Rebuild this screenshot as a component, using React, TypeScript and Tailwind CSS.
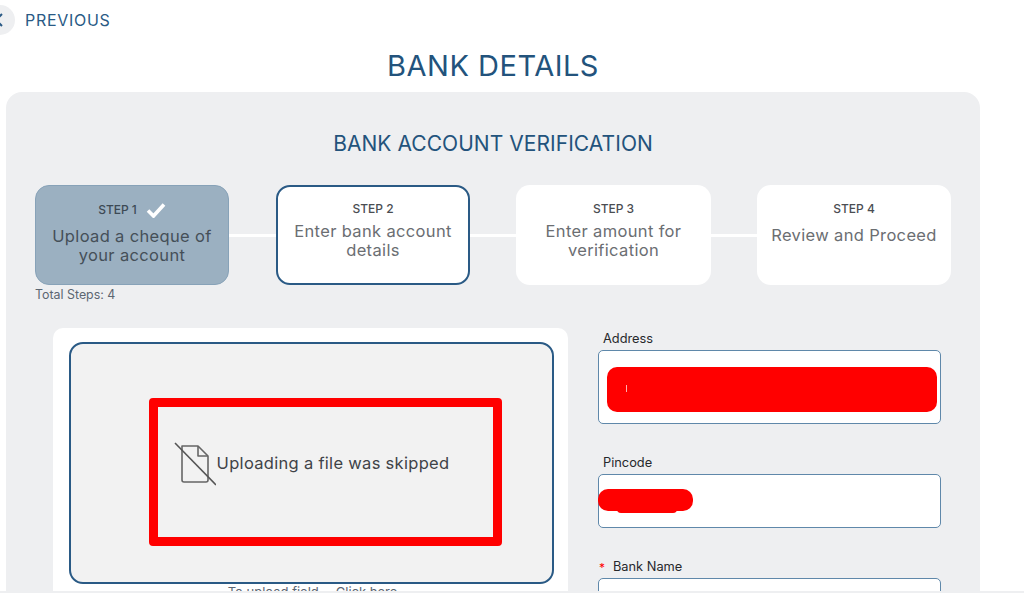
const steps = [
  { label: 'STEP 2', text: 'Enter bank account details', outlined: true },
  { label: 'STEP 3', text: 'Enter amount for verification', outlined: false },
];

function Field({ label, required, height, children }: { label: string; required?: boolean; height: string; children?: React.ReactNode }) {
  return (
    <div className="flex flex-col">
      <div className="flex items-center h-[24px] pt-[1px] text-[12.8px] text-[#26282c] pl-[5px]">
        {required && <span className="text-[#ff0000] text-[12px] w-[6px] -ml-[4px] mr-[8px] pt-[3px] leading-none">*</span>}
        {label}
      </div>
      <div className={`relative ${height} bg-white border border-[#5f88aa] rounded-[5px]`}>{children}</div>
    </div>
  );
}

export default function App() {
  return (
    <div className="h-[606px] w-[1024px] overflow-hidden bg-white font-['Inter','Open_Sans',sans-serif]">
      <div className="relative h-[591px] overflow-hidden">
        {/* Back link */}
        <div className="flex items-center h-[40px] relative">
          <div className="absolute -left-[15px] top-[5px] w-[30px] h-[30px] rounded-full bg-[#eeeff1] flex items-center justify-end pr-[11px]">
            <svg width="10" height="14" viewBox="0 0 10 14" fill="none" stroke="#2a5a85" strokeWidth="2">
              <path d="M8 1 2 7l6 6" />
            </svg>
          </div>
          <span className="ml-[25px] text-[16px] text-[#2a5a85] tracking-[0.7px]">PREVIOUS</span>
        </div>

        <h1 className="text-center text-[29px] leading-[40px] mt-[6px] mr-[38px] text-[#23537c] tracking-[0.5px]">BANK DETAILS</h1>

        {/* Main panel */}
        <div className="ml-[6px] mt-[6px] w-[974px] h-[520px] bg-[#eeeff1] rounded-[16px] pt-[37px] px-[29px]">
          <h2 className="text-center text-[21px] leading-[30px] text-[#23537c] tracking-[0.05px]">BANK ACCOUNT VERIFICATION</h2>

          {/* Stepper */}
          <div className="flex items-center mt-[26px] w-[916px]">
            <div className="flex flex-col items-center w-[194px] h-[100px] rounded-[14px] bg-[#9bb0c1] border border-[#87a2b8] pt-[12px] px-[14px] shrink-0">
              <div className="flex items-center gap-[9px] text-[12px] font-medium text-[#3d4a55] h-[24px]">
                STEP 1
                <svg width="20" height="16" viewBox="0 0 20 16" fill="none" stroke="white" strokeWidth="3.6">
                  <path d="M2 8.5 7.5 14 18 2.5" />
                </svg>
              </div>
              <p className="text-center text-[16.5px] leading-[19px] text-[#454f58] tracking-[0.35px] mt-[5px]">Upload a cheque of your account</p>
            </div>
            <div className="h-[3px] w-[47px] bg-white shrink-0" />
            {steps.map((s) => (
              <div key={s.label} className="flex items-center">
                <div className={`flex flex-col items-center h-[100px] rounded-[14px] bg-white shrink-0 ${s.outlined ? 'w-[194px] pt-[11px] px-[8px] border-2 border-[#2a5a85]' : 'w-[195px] pt-[13px] px-[8px]'}`}>
                  <div className="text-[12px] font-medium text-[#4a4d52] h-[21px] leading-[21px]">{s.label}</div>
                  <p className="text-center text-[16.5px] leading-[19px] text-[#6b6e72] tracking-[0.35px] mt-[3px]">{s.text}</p>
                </div>
                <div className="h-[3px] w-[46px] bg-white shrink-0" />
              </div>
            ))}
            <div className="flex flex-col items-center w-[194px] h-[100px] rounded-[14px] bg-white pt-[13px] shrink-0">
              <div className="text-[12px] font-medium text-[#4a4d52] h-[21px] leading-[21px]">STEP 4</div>
              <p className="text-center text-[16.5px] leading-[19px] text-[#6b6e72] tracking-[0.35px] mt-[7px]">Review and Proceed</p>
            </div>
          </div>
          <div className="text-[12.4px] leading-[18px] mt-[1px] text-[#5c6672]">Total Steps: 4</div>

          {/* Upload + form */}
          <div className="flex mt-[24px]">
            <div className="ml-[18px] w-[515px] h-[300px] bg-white rounded-t-[10px] pt-[14px] px-[16px] shrink-0">
              <div className="w-[485px] h-[242px] bg-[#f2f2f2] border-2 border-[#2a5a85] rounded-[14px] flex items-center justify-center">
                <div className="flex items-center gap-[1px] mt-[1px]">
                  <svg width="42" height="44" viewBox="0 0 42 44" fill="none" stroke="#666" strokeWidth="1.6">
                    <path d="M8 4h16l10 10v24a2 2 0 0 1-2 2H10a2 2 0 0 1-2-2V4z" strokeLinejoin="round" />
                    <path d="M24 4v10h10" strokeLinejoin="round" />
                    <path d="M1 1l41 42" stroke="#555" />
                  </svg>
                  <span className="text-[16.5px] text-[#3f4348] tracking-[0.3px]">Uploading a file was skipped</span>
                </div>
              </div>
              <div className="flex justify-center text-[13px] leading-[14px] mt-[1px] ml-[4px] text-[#5c6672] gap-[17px]">
                <span>To upload field</span>
                <span>Click here</span>
              </div>
            </div>
            <div className="ml-[30px] w-[343px] shrink-0 -mt-[2px] flex flex-col">
              <Field label="Address" height="h-[74px]" />
              <div className="mt-[26px]">
                <Field label="Pincode" height="h-[54px]" />
              </div>
              <div className="mt-[26px]">
                <Field label="Bank Name" required height="h-[54px]" />
              </div>
            </div>
          </div>
        </div>

        {/* Red annotations over the screenshot */}
        <div className="absolute left-[149px] top-[398px] w-[353px] h-[148px] border-[9px] border-[#ff0000] rounded-[4px]" />
        <div className="absolute left-[607px] top-[367px] w-[330px] h-[45px] bg-[#ff0000] rounded-[10px]" />
        <div className="absolute left-[626px] top-[385px] w-[1px] h-[7px] bg-[#ffb0b0]" />
        <div className="absolute left-[598px] top-[489px] w-[95px] h-[22px] bg-[#ff0000] rounded-[10px]" />
        <div className="absolute left-[617px] top-[505px] w-[60px] h-[8px] bg-[#ff0000] rounded-[4px]" />
      </div>
      <div className="h-[2px] bg-[#eeeff1]" />
    </div>
  );
}
